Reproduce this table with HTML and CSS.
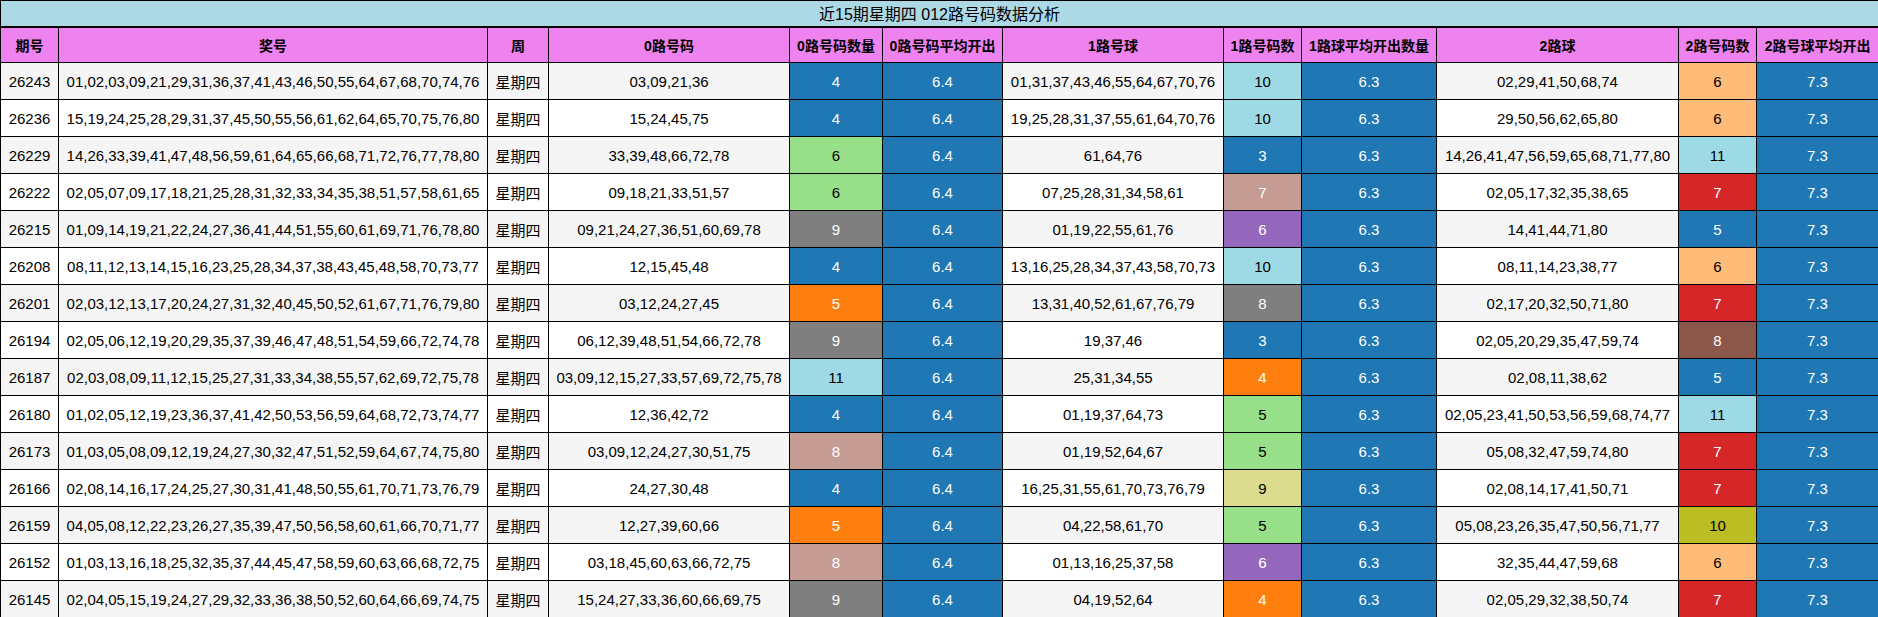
FILE: index.html
```html
<!DOCTYPE html>
<html lang="zh-CN">
<head>
<meta charset="utf-8">
<title>近15期星期四 012路号码数据分析</title>
<link rel="stylesheet" href="styles.css">
</head>
<body>
<table class="grid">
<colgroup>
<col class="w-qh"><col class="w-jh"><col class="w-zhou"><col class="w-r0"><col class="w-n0"><col class="w-a0"><col class="w-r1"><col class="w-n1"><col class="w-a1"><col class="w-r2"><col class="w-n2"><col class="w-a2">
</colgroup>
<thead>
<tr class="title"><th colspan="12">近15期星期四 012路号码数据分析</th></tr>
<tr class="head"><th>期号</th><th>奖号</th><th>周</th><th>0路号码</th><th>0路号码数量</th><th>0路号码平均开出</th><th>1路号球</th><th>1路号码数</th><th>1路球平均开出数量</th><th>2路球</th><th>2路号码数</th><th>2路号球平均开出</th></tr>
</thead>
<tbody>
<tr class="odd"><td>26243</td><td>01,02,03,09,21,29,31,36,37,41,43,46,50,55,64,67,68,70,74,76</td><td>星期四</td><td>03,09,21,36</td><td class="b">4</td><td class="b">6.4</td><td>01,31,37,43,46,55,64,67,70,76</td><td class="lb">10</td><td class="b">6.3</td><td>02,29,41,50,68,74</td><td class="pe">6</td><td class="b">7.3</td></tr>
<tr><td>26236</td><td>15,19,24,25,28,29,31,37,45,50,55,56,61,62,64,65,70,75,76,80</td><td>星期四</td><td>15,24,45,75</td><td class="b">4</td><td class="b">6.4</td><td>19,25,28,31,37,55,61,64,70,76</td><td class="lb">10</td><td class="b">6.3</td><td>29,50,56,62,65,80</td><td class="pe">6</td><td class="b">7.3</td></tr>
<tr class="odd"><td>26229</td><td>14,26,33,39,41,47,48,56,59,61,64,65,66,68,71,72,76,77,78,80</td><td>星期四</td><td>33,39,48,66,72,78</td><td class="lg">6</td><td class="b">6.4</td><td>61,64,76</td><td class="b">3</td><td class="b">6.3</td><td>14,26,41,47,56,59,65,68,71,77,80</td><td class="lb">11</td><td class="b">7.3</td></tr>
<tr><td>26222</td><td>02,05,07,09,17,18,21,25,28,31,32,33,34,35,38,51,57,58,61,65</td><td>星期四</td><td>09,18,21,33,51,57</td><td class="lg">6</td><td class="b">6.4</td><td>07,25,28,31,34,58,61</td><td class="pk">7</td><td class="b">6.3</td><td>02,05,17,32,35,38,65</td><td class="r">7</td><td class="b">7.3</td></tr>
<tr class="odd"><td>26215</td><td>01,09,14,19,21,22,24,27,36,41,44,51,55,60,61,69,71,76,78,80</td><td>星期四</td><td>09,21,24,27,36,51,60,69,78</td><td class="g">9</td><td class="b">6.4</td><td>01,19,22,55,61,76</td><td class="p">6</td><td class="b">6.3</td><td>14,41,44,71,80</td><td class="b">5</td><td class="b">7.3</td></tr>
<tr><td>26208</td><td>08,11,12,13,14,15,16,23,25,28,34,37,38,43,45,48,58,70,73,77</td><td>星期四</td><td>12,15,45,48</td><td class="b">4</td><td class="b">6.4</td><td>13,16,25,28,34,37,43,58,70,73</td><td class="lb">10</td><td class="b">6.3</td><td>08,11,14,23,38,77</td><td class="pe">6</td><td class="b">7.3</td></tr>
<tr class="odd"><td>26201</td><td>02,03,12,13,17,20,24,27,31,32,40,45,50,52,61,67,71,76,79,80</td><td>星期四</td><td>03,12,24,27,45</td><td class="o">5</td><td class="b">6.4</td><td>13,31,40,52,61,67,76,79</td><td class="g">8</td><td class="b">6.3</td><td>02,17,20,32,50,71,80</td><td class="r">7</td><td class="b">7.3</td></tr>
<tr><td>26194</td><td>02,05,06,12,19,20,29,35,37,39,46,47,48,51,54,59,66,72,74,78</td><td>星期四</td><td>06,12,39,48,51,54,66,72,78</td><td class="g">9</td><td class="b">6.4</td><td>19,37,46</td><td class="b">3</td><td class="b">6.3</td><td>02,05,20,29,35,47,59,74</td><td class="br">8</td><td class="b">7.3</td></tr>
<tr class="odd"><td>26187</td><td>02,03,08,09,11,12,15,25,27,31,33,34,38,55,57,62,69,72,75,78</td><td>星期四</td><td>03,09,12,15,27,33,57,69,72,75,78</td><td class="lb">11</td><td class="b">6.4</td><td>25,31,34,55</td><td class="o">4</td><td class="b">6.3</td><td>02,08,11,38,62</td><td class="b">5</td><td class="b">7.3</td></tr>
<tr><td>26180</td><td>01,02,05,12,19,23,36,37,41,42,50,53,56,59,64,68,72,73,74,77</td><td>星期四</td><td>12,36,42,72</td><td class="b">4</td><td class="b">6.4</td><td>01,19,37,64,73</td><td class="lg">5</td><td class="b">6.3</td><td>02,05,23,41,50,53,56,59,68,74,77</td><td class="lb">11</td><td class="b">7.3</td></tr>
<tr class="odd"><td>26173</td><td>01,03,05,08,09,12,19,24,27,30,32,47,51,52,59,64,67,74,75,80</td><td>星期四</td><td>03,09,12,24,27,30,51,75</td><td class="pk">8</td><td class="b">6.4</td><td>01,19,52,64,67</td><td class="lg">5</td><td class="b">6.3</td><td>05,08,32,47,59,74,80</td><td class="r">7</td><td class="b">7.3</td></tr>
<tr><td>26166</td><td>02,08,14,16,17,24,25,27,30,31,41,48,50,55,61,70,71,73,76,79</td><td>星期四</td><td>24,27,30,48</td><td class="b">4</td><td class="b">6.4</td><td>16,25,31,55,61,70,73,76,79</td><td class="lo">9</td><td class="b">6.3</td><td>02,08,14,17,41,50,71</td><td class="r">7</td><td class="b">7.3</td></tr>
<tr class="odd"><td>26159</td><td>04,05,08,12,22,23,26,27,35,39,47,50,56,58,60,61,66,70,71,77</td><td>星期四</td><td>12,27,39,60,66</td><td class="o">5</td><td class="b">6.4</td><td>04,22,58,61,70</td><td class="lg">5</td><td class="b">6.3</td><td>05,08,23,26,35,47,50,56,71,77</td><td class="ol">10</td><td class="b">7.3</td></tr>
<tr><td>26152</td><td>01,03,13,16,18,25,32,35,37,44,45,47,58,59,60,63,66,68,72,75</td><td>星期四</td><td>03,18,45,60,63,66,72,75</td><td class="pk">8</td><td class="b">6.4</td><td>01,13,16,25,37,58</td><td class="p">6</td><td class="b">6.3</td><td>32,35,44,47,59,68</td><td class="pe">6</td><td class="b">7.3</td></tr>
<tr class="odd"><td>26145</td><td>02,04,05,15,19,24,27,29,32,33,36,38,50,52,60,64,66,69,74,75</td><td>星期四</td><td>15,24,27,33,36,60,66,69,75</td><td class="g">9</td><td class="b">6.4</td><td>04,19,52,64</td><td class="o">4</td><td class="b">6.3</td><td>02,05,29,32,38,50,74</td><td class="r">7</td><td class="b">7.3</td></tr>
</tbody>
</table>
</body>
</html>
```
FILE: styles.css
```css
* { box-sizing: border-box; }
html, body { margin: 0; padding: 0; background: #fff; }
body { font-family: "Liberation Sans", "Noto Sans CJK SC", sans-serif; color: #000; }

.grid { border-collapse: collapse; table-layout: fixed; width: 1878px; }
.grid th, .grid td {
  border: 1px solid #000;
  padding: 0;
  text-align: center;
  vertical-align: middle;
  white-space: nowrap;
  overflow: hidden;
}

.w-qh { width: 58px; }
.w-jh { width: 429px; }
.w-zhou { width: 61px; }
.w-r0 { width: 241px; }
.w-n0 { width: 93px; }
.w-a0 { width: 120px; }
.w-r1 { width: 221px; }
.w-n1 { width: 78px; }
.w-a1 { width: 135px; }
.w-r2 { width: 242px; }
.w-n2 { width: 78px; }
.w-a2 { width: 122px; }

.title th {
  background: #add8e6;
  font-weight: normal;
  font-size: 16px;
  height: 26px;
  border-bottom: 2px solid #000;
}
.head th {
  background: #ee82ee;
  font-weight: bold;
  font-size: 14px;
  height: 36px;
}
.grid td { font-size: 15px; height: 37px; }
.grid tbody tr { background: #fff; }
.grid tbody tr.odd { background: #f5f5f5; }

.grid td.b { background: #1f77b4; color: #fff; }
.grid td.o { background: #ff7f0e; color: #fff; }
.grid td.g { background: #7f7f7f; color: #fff; }
.grid td.p { background: #9467bd; color: #fff; }
.grid td.r { background: #d62728; color: #fff; }
.grid td.br { background: #8c564b; color: #fff; }
.grid td.pk { background: #c49c94; color: #fff; }
.grid td.lg { background: #98df8a; color: #000; }
.grid td.lb { background: #9edae5; color: #000; }
.grid td.pe { background: #ffbb78; color: #000; }
.grid td.ol { background: #bcbd22; color: #000; }
.grid td.lo { background: #dbdb8d; color: #000; }
```
